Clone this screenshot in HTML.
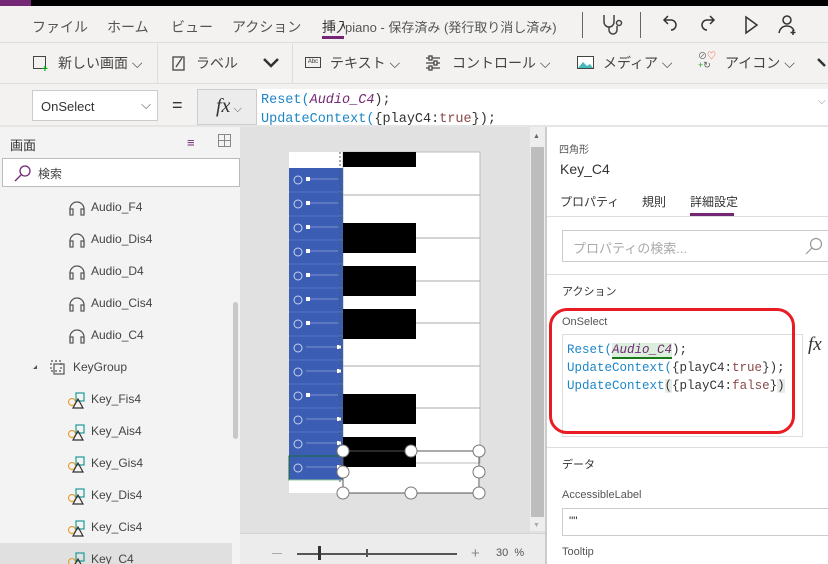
<!DOCTYPE html>
<html style="width:828px;height:564px;overflow:hidden"><head><meta charset="utf-8">
<style>
*{margin:0;padding:0;box-sizing:border-box}
body{width:828px;height:564px;overflow:hidden;background:#f3f2f1;font-family:"Liberation Sans","Noto Sans CJK JP",sans-serif;color:#333;position:relative;font-size:13px}
.a{position:absolute;white-space:nowrap}
.mono{font-family:"Liberation Mono","Noto Sans CJK JP",monospace}
.li{position:absolute;left:0;width:232px;height:32px;font-size:12px;color:#444}
.li span{position:absolute;top:1px}
</style></head><body>
<!-- top bar -->
<div class="a" style="left:0;top:0;width:828px;height:6px;background:#000"></div>
<div class="a" style="left:0;top:0;width:31px;height:6px;background:#742774"></div>
<!-- menu -->
<div class="a" style="left:32px;top:17px;font-size:14px;color:#555">ファイル</div>
<div class="a" style="left:107px;top:17px;font-size:14px;color:#555">ホーム</div>
<div class="a" style="left:171px;top:17px;font-size:14px;color:#555">ビュー</div>
<div class="a" style="left:232px;top:17px;font-size:14px;color:#555">アクション</div>
<div class="a" style="left:322px;top:17px;font-size:14px;color:#333">挿入</div>
<div class="a" style="left:322px;top:36px;width:22px;height:3px;background:#742774"></div>
<div class="a" style="left:345px;top:17px;font-size:13px;color:#555;background:#f3f2f1">piano - 保存済み (発行取り消し済み)</div>
<div class="a" style="left:582px;top:12px;width:1px;height:26px;background:#666"></div>
<div class="a" style="left:640px;top:12px;width:1px;height:26px;background:#666"></div>
<svg class="a" style="left:600px;top:12px" width="30" height="26" viewBox="0 0 30 26" fill="none" stroke="#444" stroke-width="1.5"><path d="M4 3v7a5 5 0 0 0 10 0V3M9 15v3a4 4 0 0 0 8 0v-4"/><circle cx="19" cy="11" r="2.5"/></svg>
<svg class="a" style="left:660px;top:12px" width="160" height="26" viewBox="0 0 160 26" fill="none" stroke="#333" stroke-width="1.5"><path d="M8 4L4 8l4 4M4 8h7a5 5 0 0 1 0 10"/><path d="M50 4l4 4-4 4M54 8h-7a5 5 0 0 0 0 10"/><path d="M86 5l11 8-11 8z"/><circle cx="127" cy="8" r="4"/><path d="M119 21c1-5 4-7 8-7s6 2 7 5M133 18v5M130.5 20.5h5"/></svg>
<div class="a" style="left:0;top:42px;width:828px;height:1px;background:#ddd"></div>
<!-- toolbar -->
<div class="a" style="left:157px;top:44px;width:1px;height:39px;background:#ddd"></div>
<div class="a" style="left:292px;top:44px;width:1px;height:39px;background:#ddd"></div>
<div class="a" style="left:33px;top:56px;width:13px;height:13px;border:1.3px solid #444"></div>
<div class="a" style="left:42px;top:64px;color:#0a0;font-size:10px;font-weight:bold">+</div>
<div class="a" style="left:58px;top:53px;font-size:14px;color:#444">新しい画面 ⌵</div>
<svg class="a" style="left:172px;top:55px" width="14" height="16" viewBox="0 0 14 16" fill="none" stroke="#444" stroke-width="1.3"><rect x="1" y="2" width="11" height="13"/><path d="M4 12l6-9"/></svg>
<div class="a" style="left:196px;top:53px;font-size:14px;color:#444">ラベル</div>
<svg class="a" style="left:262px;top:57px" width="18" height="12" viewBox="0 0 18 12" fill="none" stroke="#333" stroke-width="2.5"><path d="M2 2l7 7 7-7"/></svg>
<div class="a" style="left:305px;top:57px;width:16px;height:11px;border:1px solid #444;font-size:6px;line-height:9px;text-align:center">Abc</div>
<div class="a" style="left:330px;top:53px;font-size:14px;color:#444">テキスト ⌵</div>
<svg class="a" style="left:425px;top:55px" width="16" height="16" viewBox="0 0 16 16" fill="none" stroke="#444" stroke-width="1.3"><path d="M1 3h14M1 8h14M1 13h14"/><rect x="4" y="1" width="3" height="4" fill="#f3f2f1"/><rect x="9" y="6" width="3" height="4" fill="#f3f2f1"/><rect x="4" y="11" width="3" height="4" fill="#f3f2f1"/></svg>
<div class="a" style="left:452px;top:53px;font-size:14px;color:#444">コントロール ⌵</div>
<svg class="a" style="left:577px;top:56px" width="17" height="13" viewBox="0 0 17 13"><rect x=".5" y=".5" width="16" height="12" fill="#fff" stroke="#444"/><path d="M1 12l5-6 4 4 3-2 3 4z" fill="#4bb"/></svg>
<div class="a" style="left:603px;top:53px;font-size:14px;color:#444">メディア ⌵</div>
<div class="a" style="left:698px;top:52px;font-size:9px;line-height:9px;color:#555">⊘<span style="color:#e53">♡</span><br><span style="color:#2a2">+</span>↻</div>
<div class="a" style="left:725px;top:53px;font-size:14px;color:#444">アイコン ⌵</div>
<svg class="a" style="left:816px;top:57px" width="12" height="12" viewBox="0 0 12 12" fill="none" stroke="#333" stroke-width="2.5"><path d="M2 2l7 7"/></svg>
<div class="a" style="left:0;top:83px;width:828px;height:1px;background:#ddd"></div>
<!-- formula bar -->
<div class="a" style="left:32px;top:90px;width:126px;height:31px;background:#fff;border:1px solid #ccc;font-size:13px;padding:8px 8px;color:#333">OnSelect<span style="position:absolute;right:6px;top:6px;color:#555">⌵</span></div>
<div class="a" style="left:172px;top:95px;font-size:18px;color:#333">=</div>
<div class="a" style="left:197px;top:89px;width:60px;height:36px;background:#ececec;border:1px solid #ccc;font-family:'Liberation Serif',serif;font-style:italic;font-size:20px;padding:5px 0 0 18px">fx<span style="font-style:normal;font-size:11px;font-family:'Liberation Sans';color:#555"> ⌵</span></div>
<div class="a mono" style="left:257px;top:89px;width:571px;height:36px;background:#fff;overflow:hidden;font-size:13.5px;line-height:19px;padding:2px 4px;color:#1e86c8">Reset(<i style="color:#742774">Audio_C4</i><span style="color:#333">);</span><br>UpdateContext(<span style="color:#333">{playC4:</span><span style="color:#8a4a4a">true</span><span style="color:#333">});</span></div>
<div class="a" style="left:818px;top:96px;font-size:10px;color:#888">⌵</div>
<div class="a" style="left:0;top:125px;width:828px;height:2px;background:#e5e5e5"></div>
<!-- left panel -->
<div class="a" style="left:0;top:127px;width:240px;height:437px;background:#f3f3f3;overflow:hidden">
 <div class="a" style="left:10px;top:8px;font-size:13px;color:#333">画面</div>
 <div class="a" style="left:187px;top:8px;font-size:13px;color:#742774">≡</div>
 <div class="a" style="left:218px;top:7px;width:13px;height:13px;border:1px solid #888;background:linear-gradient(#888,#888) 5px 0/1px 13px no-repeat,linear-gradient(#888,#888) 0 5px/13px 1px no-repeat"></div>
 <div class="a" style="left:2px;top:31px;width:238px;height:29px;background:#fff;border:1px solid #bbb"></div>
 <svg class="a" style="left:14px;top:37px" width="18" height="18" viewBox="0 0 18 18" fill="none" stroke="#742774" stroke-width="1.3"><circle cx="11" cy="7" r="5"/><path d="M7 11l-6 6"/></svg>
 <div class="a" style="left:38px;top:38px;font-size:12px;color:#444">検索</div>
 <div class="a" style="left:0;top:416px;width:232px;height:21px;background:#e0e0e0"></div>
 <div class="a" style="left:233px;top:175px;width:5px;height:137px;background:#c8c8c8;border-radius:3px"></div>
</div>
<svg class="a" style="left:0;top:190px" width="240" height="374" viewBox="0 190 240 374" fill="none" stroke="#555" stroke-width="1.2">
 <g id="hp"><path d="M70 214v-5a7 7 0 0 1 14 0v5"/><rect x="70" y="209" width="3" height="6"/><rect x="81" y="209" width="3" height="6"/></g>
 <use href="#hp" y="32"/><use href="#hp" y="64"/><use href="#hp" y="96"/><use href="#hp" y="128"/>
 <path d="M33 369l4-4v4z" fill="#555" stroke="none"/>
 <rect x="51" y="361" width="10" height="10" stroke-dasharray="2 2"/><rect x="54" y="364" width="10" height="10"/>
 <g id="ky"><circle cx="72" cy="402" r="3.5" stroke="#e9a23b"/><rect x="76" y="393" width="8" height="8" stroke="#1a9a9a"/><path d="M73 408l5-9 5 9z" stroke="#333"/></g>
 <use href="#ky" y="32"/><use href="#ky" y="64"/><use href="#ky" y="96"/><use href="#ky" y="128"/><use href="#ky" y="160"/>
</svg>
<div class="li" style="top:199px"><span style="left:91px">Audio_F4</span></div>
<div class="li" style="top:231px"><span style="left:91px">Audio_Dis4</span></div>
<div class="li" style="top:263px"><span style="left:91px">Audio_D4</span></div>
<div class="li" style="top:295px"><span style="left:91px">Audio_Cis4</span></div>
<div class="li" style="top:327px"><span style="left:91px">Audio_C4</span></div>
<div class="li" style="top:359px"><span style="left:73px">KeyGroup</span></div>
<div class="li" style="top:391px"><span style="left:91px">Key_Fis4</span></div>
<div class="li" style="top:423px"><span style="left:91px">Key_Ais4</span></div>
<div class="li" style="top:455px"><span style="left:91px">Key_Gis4</span></div>
<div class="li" style="top:487px"><span style="left:91px">Key_Dis4</span></div>
<div class="li" style="top:519px"><span style="left:91px">Key_Cis4</span></div>
<div class="li" style="top:551px;height:13px;overflow:hidden"><span style="left:91px">Key_C4</span></div>
<!-- canvas -->
<div class="a" style="left:240px;top:127px;width:305px;height:437px;background:#e1e1e1"></div>
<div class="a" style="left:530px;top:127px;width:15px;height:404px;background:#eee"></div>
<div class="a" style="left:531px;top:147px;width:13px;height:370px;background:#bdbdbd"></div>
<div class="a" style="left:533px;top:133px;font-size:7px;color:#666">▲</div>
<div class="a" style="left:533px;top:522px;font-size:7px;color:#aaa">▼</div>
<div class="a" style="left:240px;top:533px;width:305px;height:31px;background:#ececec;border-top:1px solid #d5d5d5"></div>
<div class="a" style="left:272px;top:553px;width:10px;height:1px;background:#aaa"></div>
<div class="a" style="left:297px;top:553px;width:160px;height:2px;background:#555"></div>
<div class="a" style="left:318px;top:546px;width:3px;height:14px;background:#333"></div>
<div class="a" style="left:366px;top:549px;width:2px;height:8px;background:#555"></div>
<div class="a" style="left:471px;top:545px;font-size:15px;color:#888">+</div>
<div class="a" style="left:496px;top:547px;font-size:11px;color:#555">30 &nbsp;%</div>
<svg class="a" style="left:280px;top:145px" width="220" height="360" viewBox="280 145 220 360">
 <rect x="289" y="152" width="191" height="341" fill="#fff"/>
 <rect x="343" y="152" width="137" height="311" fill="#fff" stroke="#bbb"/>
 <g stroke="#aaa" stroke-width="1"><path d="M343 195h137M343 238h137M343 281h137M343 323h137M343 366h137M343 408h137M343 451h137"/></g>
 <g fill="#000"><rect x="343" y="152" width="73" height="15"/><rect x="343" y="223" width="73" height="30"/><rect x="343" y="266" width="73" height="30"/><rect x="343" y="309" width="73" height="30"/><rect x="343" y="394" width="73" height="30"/><rect x="343" y="437" width="73" height="30"/></g>
 <rect x="289" y="168" width="54" height="312" fill="#3b5db4"/>
 <g stroke="#5674c4"><path d="M289 192h54M289 216h54M289 240h54M289 264h54M289 288h54M289 312h54M289 336h54M289 360h54M289 384h54M289 408h54M289 432h54M289 456h54"/></g>
 <g fill="none" stroke="#c8d2ee" stroke-width="1">
  <circle cx="298" cy="180" r="4"/><circle cx="298" cy="204" r="4"/><circle cx="298" cy="228" r="4"/><circle cx="298" cy="252" r="4"/><circle cx="298" cy="276" r="4"/><circle cx="298" cy="300" r="4"/><circle cx="298" cy="324" r="4"/><circle cx="298" cy="348" r="4"/><circle cx="298" cy="372" r="4"/><circle cx="298" cy="396" r="4"/><circle cx="298" cy="420" r="4"/><circle cx="298" cy="444" r="4"/><circle cx="298" cy="468" r="4"/>
  <path d="M306 179h32M306 203h32M306 227h32M306 251h32M306 275h32M306 299h32M306 323h32M306 347h32M306 371h32M306 395h32M306 419h32M306 443h32M306 467h32" stroke="#7d93d2"/>
 </g>
 <g fill="#fff"><rect x="306" y="177" width="4" height="4"/><rect x="306" y="201" width="4" height="4"/><rect x="306" y="225" width="4" height="4"/><rect x="306" y="249" width="4" height="4"/><rect x="306" y="273" width="4" height="4"/><rect x="306" y="297" width="4" height="4"/><rect x="306" y="321" width="4" height="4"/><rect x="337" y="345" width="4" height="4"/><rect x="337" y="369" width="4" height="4"/><rect x="306" y="393" width="4" height="4"/><rect x="337" y="417" width="4" height="4"/><rect x="337" y="441" width="4" height="4"/><rect x="337" y="465" width="4" height="4"/></g>
 <rect x="289" y="456" width="54" height="24" fill="none" stroke="#1a6a3a"/>
 <path d="M289 480h54" stroke="#9c9"/>
 <path d="M340 152v330" stroke="#555" stroke-dasharray="2 2"/>
 <rect x="343" y="451" width="136" height="42" fill="none" stroke="#555"/>
 <g fill="#fff" stroke="#777"><circle cx="343" cy="451" r="6"/><circle cx="411" cy="451" r="6"/><circle cx="479" cy="451" r="6"/><circle cx="343" cy="472" r="6"/><circle cx="479" cy="472" r="6"/><circle cx="343" cy="493" r="6"/><circle cx="411" cy="493" r="6"/><circle cx="479" cy="493" r="6"/></g>
</svg>
<!-- right panel -->
<div class="a" style="left:545px;top:127px;width:283px;height:437px;background:#fff;border-left:2px solid #ccc"></div>
<div class="a" style="left:559px;top:141px;font-size:10px;color:#555">四角形</div>
<div class="a" style="left:560px;top:161px;font-size:14px;color:#333">Key_C4</div>
<div class="a" style="left:560px;top:193px;font-size:12px;color:#333">プロパティ</div>
<div class="a" style="left:642px;top:193px;font-size:12px;color:#333">規則</div>
<div class="a" style="left:690px;top:193px;font-size:12px;color:#333">詳細設定</div>
<div class="a" style="left:690px;top:213px;width:44px;height:3px;background:#742774"></div>
<div class="a" style="left:547px;top:216px;width:281px;height:1px;background:#ddd"></div>
<div class="a" style="left:562px;top:230px;width:270px;height:32px;border:1px solid #ccc;font-size:13px;color:#aaa;padding:7px 10px">プロパティの検索...</div>
<svg class="a" style="left:805px;top:237px" width="18" height="18" viewBox="0 0 18 18" fill="none" stroke="#999" stroke-width="1.2"><circle cx="11" cy="7" r="5.5"/><path d="M7 11l-6 6"/></svg>
<div class="a" style="left:547px;top:274px;width:281px;height:1px;background:#ddd"></div>
<div class="a" style="left:562px;top:283px;font-size:11px;color:#333">アクション</div>
<div class="a" style="left:562px;top:316px;font-size:11px;color:#555">OnSelect</div>
<div class="a" style="left:562px;top:334px;width:241px;height:103px;border:1px solid #ddd"></div>
<div class="a mono" style="left:567px;top:341px;font-size:12.5px;line-height:18px;color:#1e86c8">Reset(<i style="color:#742774;background:#dcefdc;border-bottom:2px solid #1a7a1a">Audio_C4</i><span style="color:#333">);</span><br>UpdateContext(<span style="color:#333">{playC4:</span><span style="color:#8a4a4a">true</span><span style="color:#333">});</span><br>UpdateContext<span style="color:#333;background:#e8ece8">(</span><span style="color:#333">{playC4:</span><span style="color:#8a4a4a">false</span><span style="color:#333">}</span><span style="color:#333;background:#e8ece8">)</span></div>
<div class="a" style="left:549px;top:308px;width:246px;height:126px;border:3.5px solid #e81c24;border-radius:18px"></div>
<div class="a" style="left:808px;top:334px;font-family:'Liberation Serif',serif;font-style:italic;font-size:19px;color:#333">fx</div>
<div class="a" style="left:547px;top:447px;width:281px;height:1px;background:#ddd"></div>
<div class="a" style="left:562px;top:456px;font-size:11px;color:#333">データ</div>
<div class="a" style="left:562px;top:489px;font-size:11px;color:#555">AccessibleLabel</div>
<div class="a" style="left:562px;top:508px;width:270px;height:28px;border:1px solid #ccc;font-size:12px;color:#333;padding:5px 6px">""</div>
<div class="a" style="left:562px;top:546px;font-size:11px;color:#555">Tooltip</div>
</body></html>
